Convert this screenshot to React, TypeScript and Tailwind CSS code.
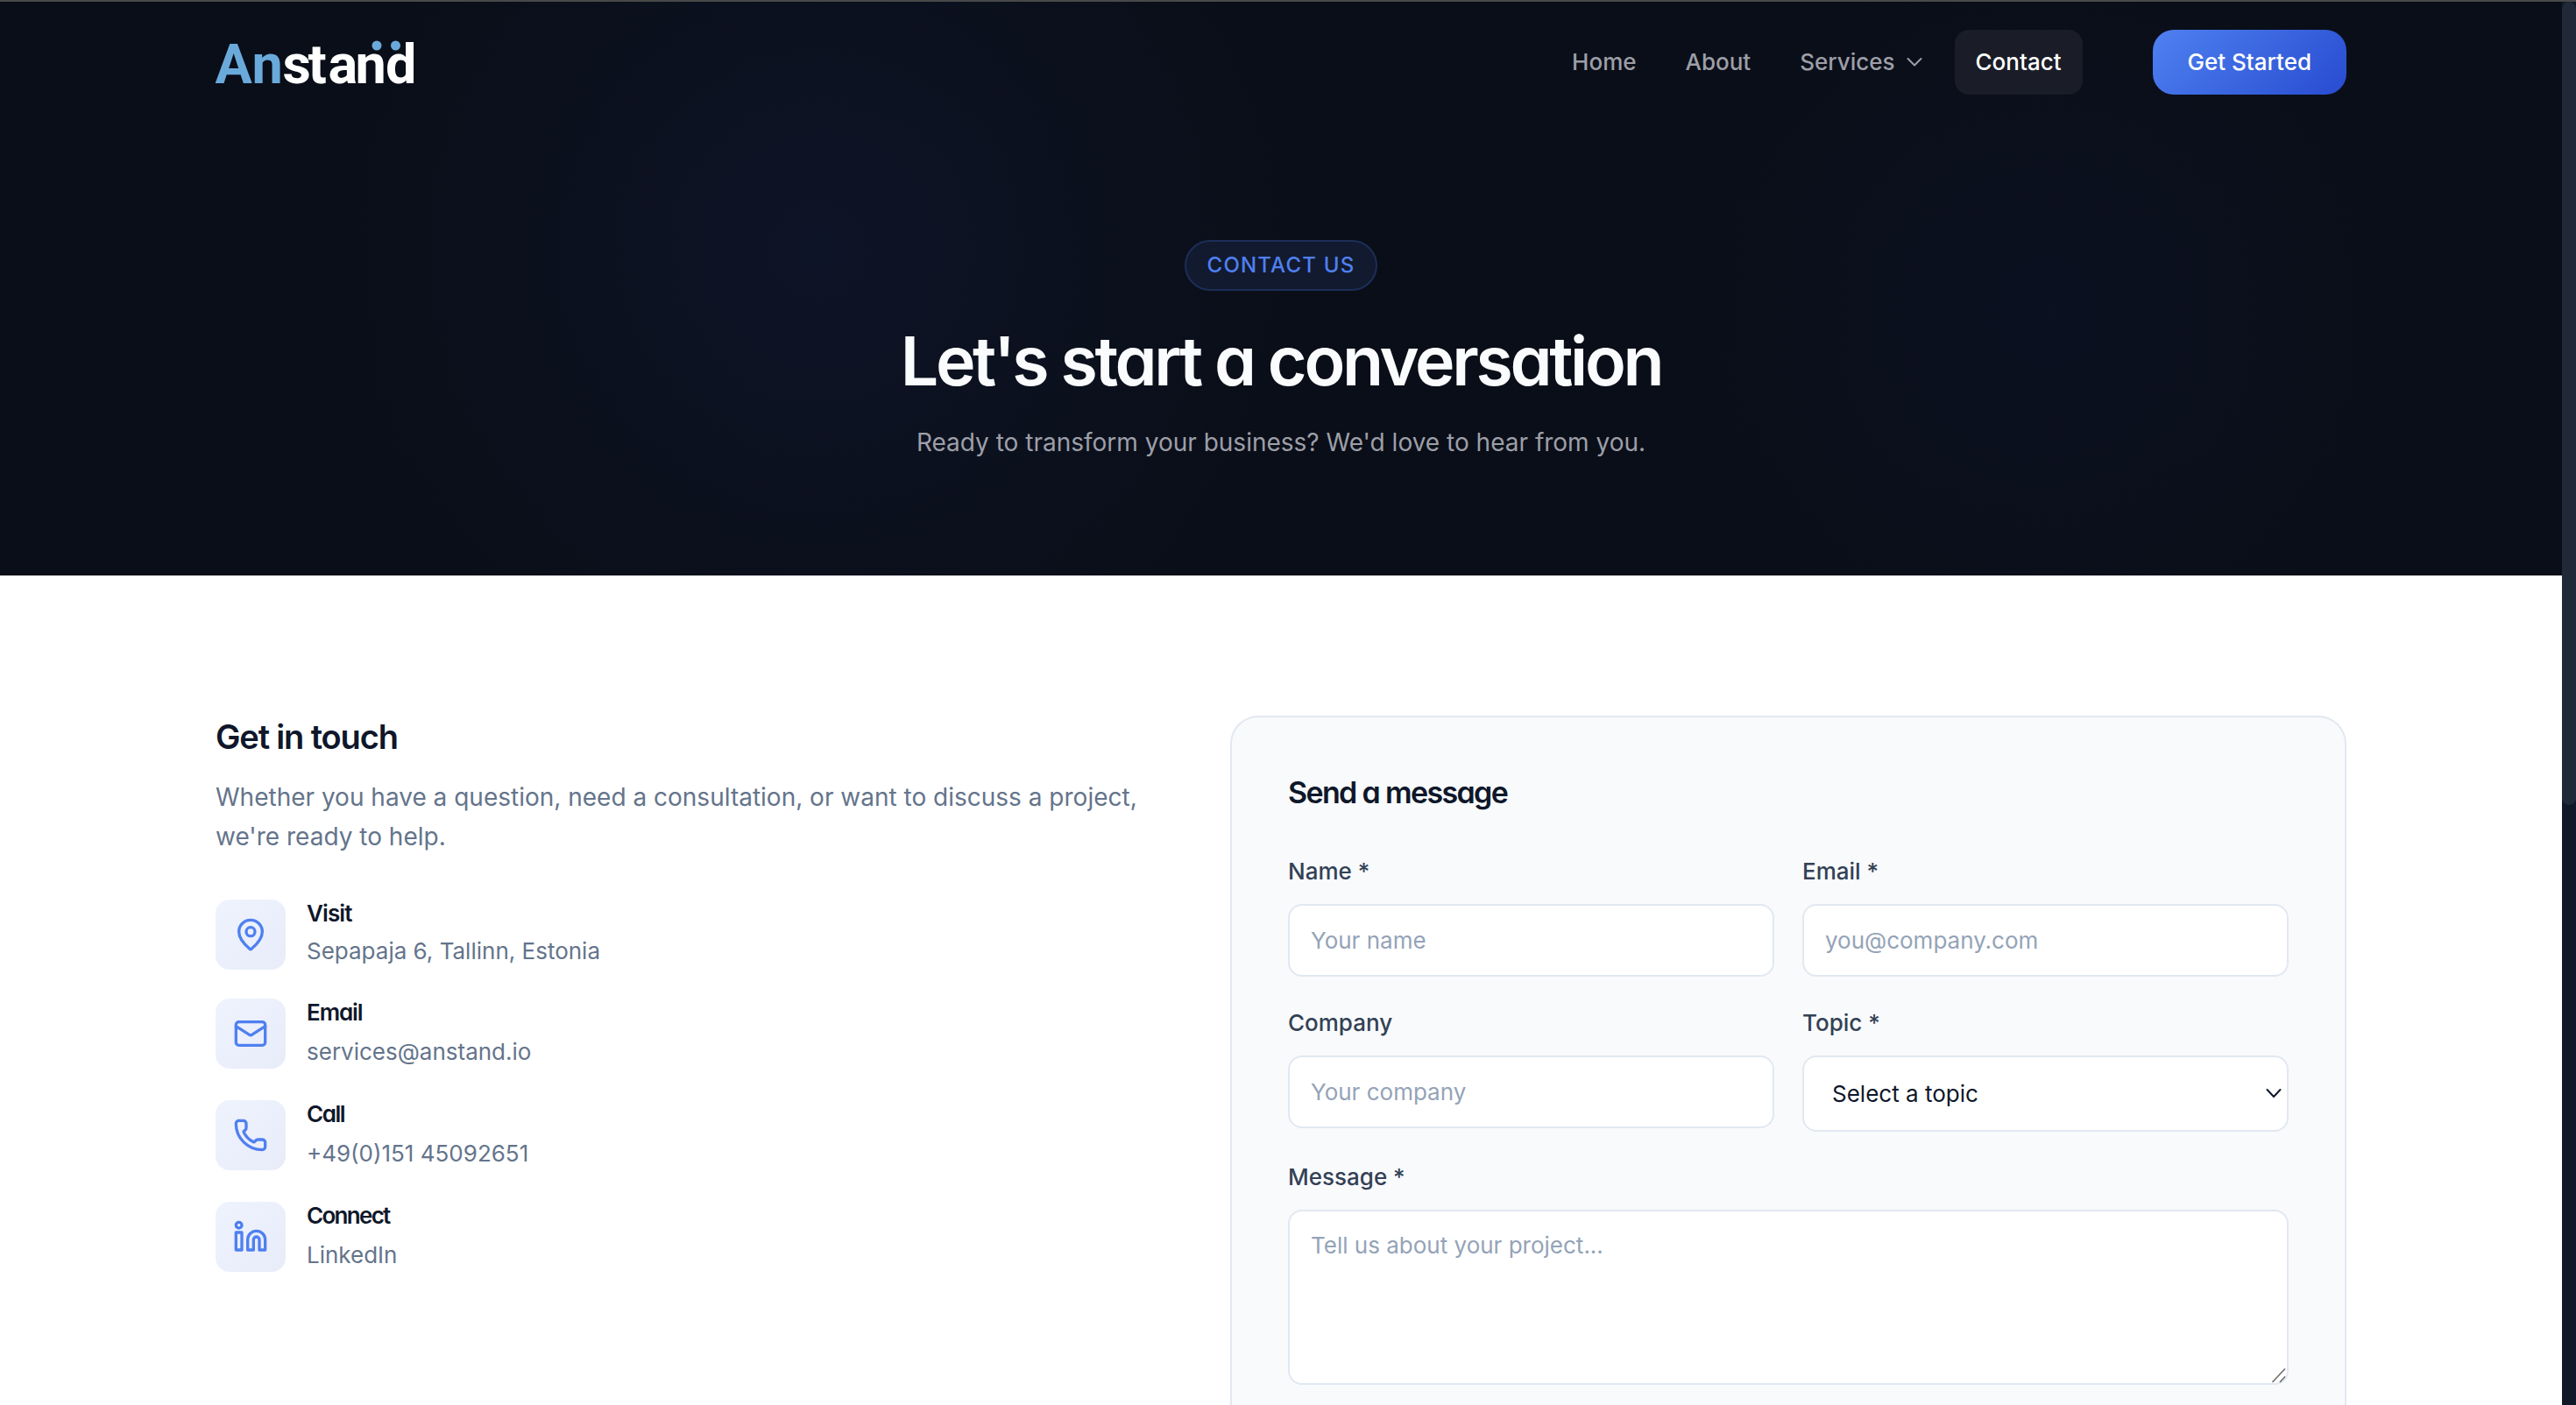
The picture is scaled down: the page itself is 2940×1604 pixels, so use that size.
import { Linkedin, Mail, MapPin, Phone, type LucideIcon } from 'lucide-react';

const display = "font-semibold [font-feature-settings:'cv11']";

function Logo() {
  return (
    <svg width="240" height="84" viewBox="-4 0 240 84" className="-ml-1 font-['Roboto'] text-[63px] font-bold" aria-label="Anstand">
      <text y="66" fill="#6aaadb" x="-0.5 41.5">An</text>
      <text y="66" fill="#ffffff" x="76.5 105.5 128.5 159.5 194">stand</text>
      <circle cx="184" cy="23" r="5.500" fill="#6aaadb" />
      <circle cx="205.500" cy="23" r="5.500" fill="#6aaadb" />
    </svg>
  );
}

function Header() {
  const link = 'flex h-[74px] items-center rounded-2xl px-6 pb-px';
  return (
    <header className="relative flex h-[138px] items-center justify-between px-[246px]">
      <Logo />
      <div className="flex items-center gap-20">
        <nav className="flex items-center gap-2 text-[26px] font-medium text-[#9d9fa8]">
          <a className={link}>Home</a>
          <a className={link}>About</a>
          <a className={`${link} mr-1 gap-3`}>
            Services
            <svg width="20" height="12" viewBox="0 0 20 12" fill="none" stroke="currentColor" strokeWidth="2" strokeLinecap="round" strokeLinejoin="round">
              <path d="M2.500 2 10 9.500 17.500 2" />
            </svg>
          </a>
          <a className={`${link} bg-[#1a1c27] text-white`}>Contact</a>
        </nav>
        <a className="flex h-[74px] items-center rounded-[24px] bg-linear-135 from-[#4f80f0] to-[#294bd0] px-10 pb-px text-[26px] font-medium text-white">
          Get Started
        </a>
      </div>
    </header>
  );
}

function Hero() {
  return (
    <section className="h-[655px] bg-[#0a0e18] bg-[radial-gradient(circle_at_937px_284px,rgba(60,100,225,0.075),rgba(60,100,225,0.035)_260px,rgba(60,100,225,0)_560px),radial-gradient(circle_at_2334px_356px,rgba(20,60,160,0.06),rgba(20,60,160,0)_420px)]">
      <Header />
      <div className="flex flex-col items-center pt-[134px]">
        <span className="flex h-[58px] items-center rounded-full border-2 border-[#1c2e58] bg-[#121a2f] px-6 text-[24px] font-medium tracking-[1.200px] text-[#4f80f0]">
          CONTACT US
        </span>
        <h1 className={`${display} mt-[36px] text-[77px] leading-[88px] tracking-[-3.300px] text-[#fafbfd]`}>
          Let's start a conversation
        </h1>
        <p className="mt-[27px] text-[28px] leading-[45px] text-[#9d9fa8]">
          Ready to transform your business? We'd love to hear from you.
        </p>
      </div>
    </section>
  );
}

type ContactItemProps = { icon: LucideIcon; title: string; text: string; tracking: string; gap: string };

function ContactItem({ icon: Icon, title, text, tracking, gap }: ContactItemProps) {
  return (
    <div className="flex h-20 gap-6">
      <div className="flex size-20 items-center justify-center rounded-2xl bg-linear-135 from-[#eef3fe] to-[#e8ecf9] text-[#4f80f0]">
        <Icon size={40} strokeWidth={2} />
      </div>
      <div>
        <h3 className={`${display} ${tracking} text-[26px] leading-8 text-[#0f172a]`}>{title}</h3>
        <p className={`${gap} text-[26px] leading-[42px] text-[#64748b]`}>{text}</p>
      </div>
    </div>
  );
}

function GetInTouch() {
  return (
    <div className="w-[1094px]">
      <h2 className={`${display} text-[38px] leading-[48px] tracking-[-1.150px] text-[#0f172a]`}>Get in touch</h2>
      <p className="mt-[23px] text-[28px] leading-[45px] text-[#64748b]">
        Whether you have a question, need a consultation, or want to discuss a project, we're ready to help.
      </p>
      <div className="mt-[49px]">
        <ContactItem icon={MapPin} title="Visit" text="Sepapaja 6, Tallinn, Estonia" tracking="tracking-[-0.900px]" gap="mt-1.5" />
        <div className="mt-[33px] flex flex-col gap-9">
          <ContactItem icon={Mail} title="Email" text="services@anstand.io" tracking="tracking-[-1.100px]" gap="mt-2" />
          <ContactItem icon={Phone} title="Call" text="+49(0)151 45092651" tracking="tracking-[-1.500px]" gap="mt-2" />
          <ContactItem icon={Linkedin} title="Connect" text="LinkedIn" tracking="tracking-[-1.700px]" gap="mt-2" />
        </div>
      </div>
    </div>
  );
}

const label = 'text-[26px] leading-[42px] font-medium text-[#334155]';
const field = 'w-full rounded-2xl border-2 border-[#e2e8f0] bg-white text-[26px] outline-none placeholder:text-[#94a3b8]';

function TextField({ name, placeholder }: { name: string; placeholder: string }) {
  return (
    <label className="flex flex-col gap-4">
      <span className={label}>{name}</span>
      <input className={`${field} h-[83px] px-6`} placeholder={placeholder} />
    </label>
  );
}

function MessageForm() {
  return (
    <form className="w-[1274px] rounded-t-[32px] border-2 border-b-0 border-[#e2e8f0] bg-[#f8fafc] px-16 pt-16 pb-16">
      <h2 className={`${display} text-[34px] leading-[44px] tracking-[-1.650px] text-[#0f172a]`}>Send a message</h2>
      <div className="mt-[47px] grid grid-cols-2 gap-8">
        <TextField name="Name *" placeholder="Your name" />
        <TextField name="Email *" placeholder="you@company.com" />
        <TextField name="Company" placeholder="Your company" />
        <label className="flex flex-col gap-4">
          <span className={label}>Topic *</span>
          <span className="relative">
            <select className={`${field} h-[87px] appearance-none pr-12 pl-8 text-[#0f172a]`}>
              <option>Select a topic</option>
            </select>
            <svg width="20" height="14" viewBox="0 0 20 14" className="absolute top-[36px] right-[7px]" fill="none" stroke="#0f172a" strokeWidth="2" strokeLinecap="round" strokeLinejoin="round">
              <path d="M2.500 3 10 11 17.500 3" />
            </svg>
          </span>
        </label>
      </div>
      <label className="mt-[31px] flex flex-col gap-4">
        <span className={label}>Message *</span>
        <span className="relative">
          <textarea className={`${field} block h-[200px] resize-none px-6 pt-[18px] leading-[42px]`} placeholder="Tell us about your project..." />
          <svg width="18" height="18" viewBox="0 0 18 18" className="absolute right-[2px] bottom-[2px]" stroke="#6b6b6b" strokeWidth="1.500">
            <path d="M1.500 17 16 1.500M10 17l6-6.500" />
          </svg>
        </span>
      </label>
    </form>
  );
}

export default function App() {
  return (
    <div className="flex h-[1604px] w-[2940px] flex-col overflow-hidden bg-white font-['Inter',sans-serif]">
      <div className="h-0.5 shrink-0 bg-[#484a49]" />
      <div className="flex min-h-0 flex-1">
        <main className="w-[2924px] overflow-hidden">
          <Hero />
          <section className="flex items-start justify-between px-[246px] pt-40">
            <GetInTouch />
            <MessageForm />
          </section>
          <div className="h-40" />
        </main>
        <div className="w-4 bg-[#111827]">
          <div className="h-[917px] rounded-full bg-[#1f2937]" />
        </div>
      </div>
    </div>
  );
}
